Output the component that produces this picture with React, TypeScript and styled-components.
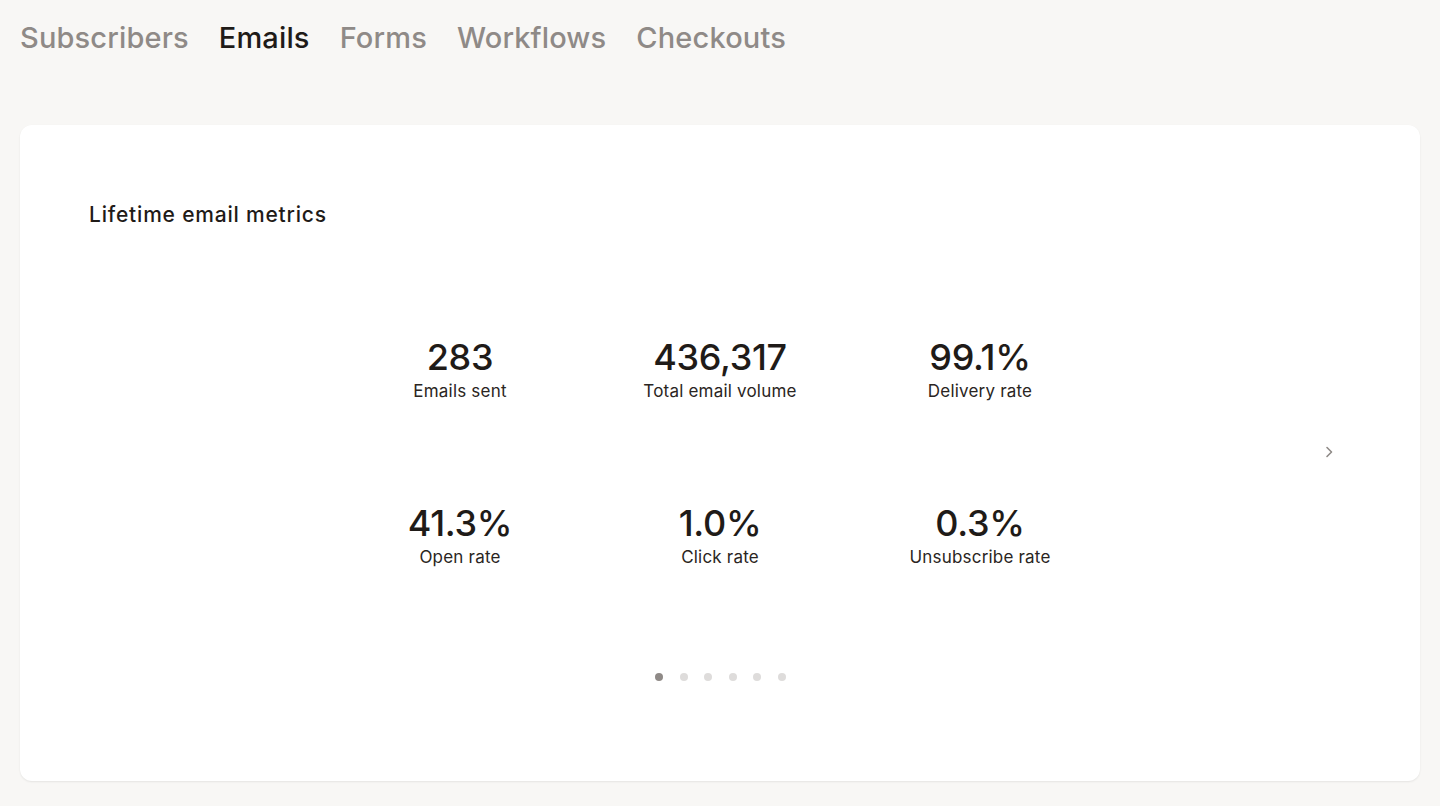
import React from "react";
import styled, { createGlobalStyle } from "styled-components";

const Global = createGlobalStyle`
  html, body {
    margin: 0;
    background: #f8f7f5;
    font-family: Inter, "Noto Sans", sans-serif;
    color: #1f1b18;
  }
`;

const Page = styled.main`
  padding: 14px 20px 24px;
`;

const Tabs = styled.nav`
  display: flex;
  gap: 30px;
  height: 111px;
`;

const Tab = styled.a<{ $active?: boolean }>`
  font-size: 29px;
  font-weight: 500;
  letter-spacing: 0.15px;
  line-height: 48px;
  color: ${(p) => (p.$active ? "#1f1b18" : "#8f8a87")};
  cursor: pointer;
`;

const Card = styled.section`
  background: #fff;
  border-radius: 12px;
  box-shadow: 0 1px 2px rgba(0, 0, 0, 0.08);
  padding: 76px 69px 100px;
`;

const Heading = styled.h2`
  margin: 0;
  font-size: 21px;
  font-weight: 500;
  line-height: 28px;
  letter-spacing: 0.8px;
  color: #1f1b18;
`;

const Carousel = styled.div`
  display: grid;
  grid-template-columns: 1fr auto 1fr;
  align-items: center;
  margin-top: 106px;
`;

const Metrics = styled.div`
  grid-column: 2;
  display: grid;
  grid-template-columns: repeat(3, 260px);
  row-gap: 98px;
`;

const Metric = styled.div`
  display: flex;
  flex-direction: column;
  align-items: center;
`;

const Value = styled.div`
  font-size: 36px;
  font-weight: 500;
  line-height: 44px;
  letter-spacing: -0.3px;
`;

const Label = styled.div`
  font-size: 17px;
  line-height: 24px;
  letter-spacing: 0.2px;
  color: #2a2522;
`;

const NextButton = styled.button`
  grid-column: 3;
  justify-self: end;
  margin-right: 10px;
  width: 24px;
  height: 24px;
  padding: 0;
  border: none;
  background: none;
  display: flex;
  align-items: center;
  justify-content: center;
  color: #8f8a87;
  cursor: pointer;
`;

const Dots = styled.div`
  display: flex;
  justify-content: center;
  gap: 16.5px;
  margin-top: 104px;
  padding-left: 1px;
`;

const Dot = styled.span<{ $active?: boolean }>`
  width: 8px;
  height: 8px;
  border-radius: 50%;
  background: ${(p) => (p.$active ? "#8f8a87" : "#dedcdb")};
`;

const tabs = ["Subscribers", "Emails", "Forms", "Workflows", "Checkouts"];

const metrics = [
  { value: "283", label: "Emails sent" },
  { value: "436,317", label: "Total email volume" },
  { value: "99.1%", label: "Delivery rate" },
  { value: "41.3%", label: "Open rate" },
  { value: "1.0%", label: "Click rate" },
  { value: "0.3%", label: "Unsubscribe rate" },
];

export default function App() {
  return (
    <>
      <Global />
      <Page>
        <Tabs>
          {tabs.map((t) => (
            <Tab key={t} $active={t === "Emails"}>
              {t}
            </Tab>
          ))}
        </Tabs>
        <Card>
          <Heading>Lifetime email metrics</Heading>
          <Carousel>
            <Metrics>
              {metrics.map((m) => (
                <Metric key={m.label}>
                  <Value>{m.value}</Value>
                  <Label>{m.label}</Label>
                </Metric>
              ))}
            </Metrics>
            <NextButton aria-label="Next">
              <svg width="14" height="14" viewBox="0 0 14 14" fill="none">
                <path d="M5 2.5 L9.5 7 L5 11.5" stroke="currentColor" strokeWidth="1.6" strokeLinecap="round" strokeLinejoin="round" />
              </svg>
            </NextButton>
          </Carousel>
          <Dots>
            {[0, 1, 2, 3, 4, 5].map((i) => (
              <Dot key={i} $active={i === 0} />
            ))}
          </Dots>
        </Card>
      </Page>
    </>
  );
}
